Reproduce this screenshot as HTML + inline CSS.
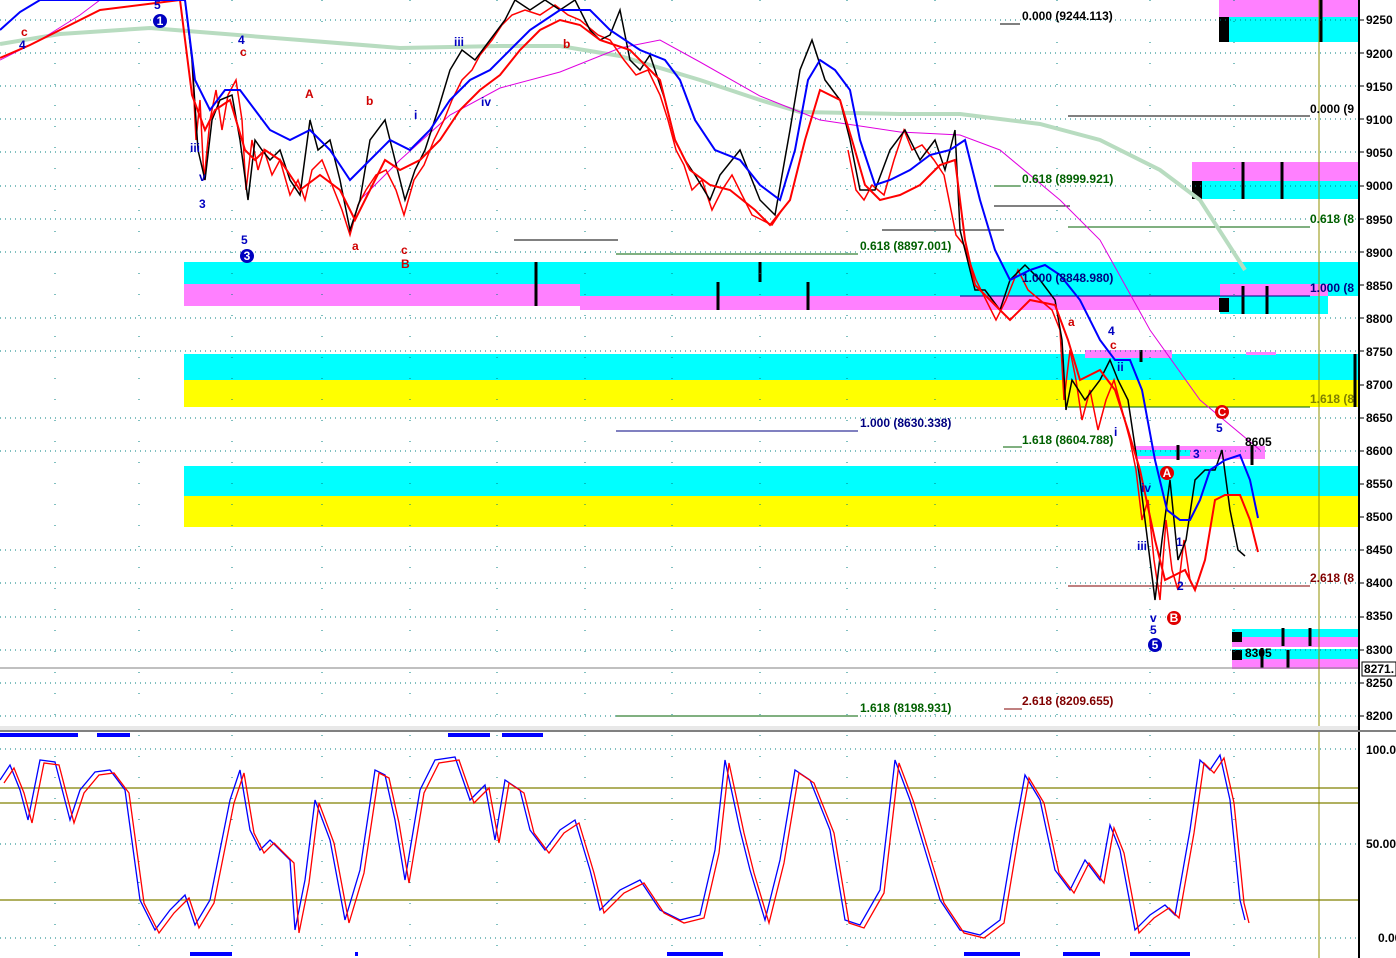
<!DOCTYPE html>
<html><head><meta charset="utf-8"><style>
html,body{margin:0;padding:0;background:#fff;overflow:hidden}
svg{display:block}
text{font-family:"Liberation Sans",Arial,sans-serif;font-weight:bold;font-size:12px}
</style></head><body>
<svg width="1396" height="958" viewBox="0 0 1396 958" xmlns="http://www.w3.org/2000/svg">
<rect width="1396" height="958" fill="#fff"/>
<rect x="184" y="262" width="396" height="22" fill="#00ffff"/>
<rect x="184" y="284" width="396" height="22" fill="#ff80ff"/>
<rect x="580" y="262" width="778" height="34" fill="#00ffff"/>
<rect x="580" y="296" width="640" height="14" fill="#ff80ff"/>
<rect x="1220" y="284" width="108" height="30" fill="#ff80ff"/>
<rect x="1220" y="296" width="108" height="18" fill="#00ffff"/>
<rect x="184" y="354" width="1174" height="26" fill="#00ffff"/>
<rect x="184" y="380" width="1174" height="27" fill="#ffff00"/>
<rect x="184" y="466" width="1174" height="30" fill="#00ffff"/>
<rect x="184" y="496" width="1174" height="31" fill="#ffff00"/>
<rect x="1085" y="350" width="87" height="8" fill="#ff80ff"/>
<rect x="1135" y="446" width="130" height="13" fill="#ff80ff"/>
<rect x="1135" y="450" width="55" height="6" fill="#00ffff"/>
<rect x="1219" y="0" width="139" height="17" fill="#ff80ff"/>
<rect x="1219" y="17" width="139" height="25" fill="#00ffff"/>
<rect x="1219" y="17" width="10" height="25" fill="#000"/>
<rect x="1192" y="162" width="166" height="19" fill="#ff80ff"/>
<rect x="1192" y="181" width="166" height="18" fill="#00ffff"/>
<rect x="1192" y="181" width="10" height="18" fill="#000"/>
<rect x="1232" y="629" width="126" height="8" fill="#00ffff"/>
<rect x="1232" y="637" width="126" height="10" fill="#ff80ff"/>
<rect x="1232" y="649" width="126" height="10" fill="#00ffff"/>
<rect x="1232" y="659" width="126" height="10" fill="#ff80ff"/>
<rect x="1232" y="632" width="10" height="10" fill="#000"/>
<rect x="1232" y="650" width="10" height="10" fill="#000"/>
<rect x="1246" y="352" width="30" height="3" fill="#ff80ff"/>
<g stroke="#000" stroke-width="3">
<line x1="536" y1="262" x2="536" y2="306"/><line x1="718" y1="282" x2="718" y2="310"/><line x1="760" y1="262" x2="760" y2="282"/><line x1="808" y1="282" x2="808" y2="310"/>
<line x1="1321" y1="0" x2="1321" y2="42"/><line x1="1243" y1="162" x2="1243" y2="199"/><line x1="1282" y1="162" x2="1282" y2="199"/>
<line x1="1243" y1="286" x2="1243" y2="314"/><line x1="1267" y1="286" x2="1267" y2="314"/><line x1="1355" y1="354" x2="1355" y2="407"/>
<line x1="1141" y1="350" x2="1141" y2="362"/><line x1="1178" y1="445" x2="1178" y2="460"/><line x1="1252" y1="445" x2="1252" y2="465"/>
<line x1="1283" y1="628" x2="1283" y2="646"/><line x1="1310" y1="628" x2="1310" y2="646"/><line x1="1262" y1="648" x2="1262" y2="668"/><line x1="1288" y1="650" x2="1288" y2="668"/>
</g>
<rect x="1219" y="298" width="10" height="14" fill="#000"/>
<g stroke="#008080" stroke-dasharray="1,4" stroke-width="1">
<line x1="0" y1="20" x2="1358" y2="20"/><line x1="0" y1="53" x2="1358" y2="53"/><line x1="0" y1="86" x2="1358" y2="86"/><line x1="0" y1="119" x2="1358" y2="119"/><line x1="0" y1="152" x2="1358" y2="152"/><line x1="0" y1="186" x2="1358" y2="186"/><line x1="0" y1="219" x2="1358" y2="219"/><line x1="0" y1="252" x2="1358" y2="252"/><line x1="0" y1="318" x2="1358" y2="318"/><line x1="0" y1="351" x2="1358" y2="351"/><line x1="0" y1="418" x2="1358" y2="418"/><line x1="0" y1="451" x2="1358" y2="451"/><line x1="0" y1="550" x2="1358" y2="550"/><line x1="0" y1="583" x2="1358" y2="583"/><line x1="0" y1="617" x2="1358" y2="617"/><line x1="0" y1="650" x2="1358" y2="650"/><line x1="0" y1="683" x2="1358" y2="683"/><line x1="0" y1="716" x2="1358" y2="716"/>
<line x1="0" y1="749" x2="1358" y2="749"/><line x1="0" y1="844" x2="1358" y2="844"/><line x1="0" y1="938" x2="1358" y2="938"/>
</g>
<g stroke="#008080" stroke-dasharray="1,20" stroke-width="1">
<line x1="55" y1="0" x2="55" y2="958"/><line x1="139" y1="0" x2="139" y2="958"/><line x1="232" y1="0" x2="232" y2="958"/><line x1="322" y1="0" x2="322" y2="958"/><line x1="410" y1="0" x2="410" y2="958"/><line x1="497" y1="0" x2="497" y2="958"/><line x1="585" y1="0" x2="585" y2="958"/><line x1="672" y1="0" x2="672" y2="958"/><line x1="760" y1="0" x2="760" y2="958"/><line x1="847" y1="0" x2="847" y2="958"/><line x1="935" y1="0" x2="935" y2="958"/><line x1="1057" y1="0" x2="1057" y2="958"/><line x1="1150" y1="0" x2="1150" y2="958"/><line x1="1234" y1="0" x2="1234" y2="958"/>
</g>
<g stroke-width="1">
<line x1="1000" y1="24" x2="1020" y2="24" stroke="#000"/>
<line x1="1068" y1="116" x2="1310" y2="116" stroke="#000"/>
<line x1="994" y1="186" x2="1020" y2="186" stroke="#006000"/>
<line x1="994" y1="206" x2="1070" y2="206" stroke="#000"/>
<line x1="1068" y1="227" x2="1310" y2="227" stroke="#006000"/>
<line x1="514" y1="240" x2="618" y2="240" stroke="#000"/>
<line x1="616" y1="254" x2="858" y2="254" stroke="#006000"/>
<line x1="882" y1="230" x2="1004" y2="230" stroke="#000"/>
<line x1="960" y1="296" x2="1310" y2="296" stroke="#000080"/>
<line x1="616" y1="431" x2="858" y2="431" stroke="#000080"/>
<line x1="1068" y1="407" x2="1310" y2="407" stroke="#006000"/>
<line x1="1003" y1="447" x2="1022" y2="447" stroke="#006000"/>
<line x1="1068" y1="586" x2="1310" y2="586" stroke="#800000"/>
<line x1="616" y1="716" x2="858" y2="716" stroke="#006000"/>
<line x1="1004" y1="709" x2="1022" y2="709" stroke="#800000"/>
<line x1="0" y1="668" x2="1358" y2="668" stroke="#808080"/>
<line x1="1319" y1="0" x2="1319" y2="958" stroke="#909000"/>
</g>
<polyline fill="none" stroke="#b8dcc0" stroke-width="4" points="0,44 60,34 150,28 200,32 300,40 400,48 500,46 560,46 620,56 700,80 760,100 800,112 900,114 960,114 1040,124 1100,140 1160,170 1200,200 1245,270"/>
<polyline fill="none" stroke="#e000e0" stroke-width="1" points="0,60 40,40 80,15 100,0"/>
<polyline fill="none" stroke="#e000e0" stroke-width="1" points="360,200 400,160 450,115 500,88 560,72 620,48 660,40 700,62 760,96 820,120 900,132 960,135 1000,150 1060,200 1100,240 1150,330 1200,400 1260,450"/>
<!-- red candle clutter -->
<polyline fill="none" stroke="#ff0000" stroke-width="1.5" points="192,60 196,140 200,100 204,180 210,120 216,90 222,130 228,95 236,80 242,120 246,190 252,140 258,170 264,150 272,175 280,160 290,195 298,180 305,200 312,170 322,160 332,185 342,210 350,235 358,205 366,190 376,175 386,170 396,190 404,215 414,180 424,165 434,140 444,120 452,100 462,80 472,70 480,55 492,40 502,25 512,15 525,10 540,15 555,5 568,15 580,20 598,35 610,40 624,60 636,75 648,70 660,95 668,120 676,150 684,165 692,190 702,180 712,210 722,190 732,175 742,195 752,215 762,220 772,225 782,210"/>
<polyline fill="none" stroke="#ff0000" stroke-width="1.5" points="848,150 856,190 864,200 872,185 884,195 894,160 904,130 912,150 922,145 934,160 944,175 956,235 964,245 976,280 986,300 996,320 1006,300 1018,270 1028,290 1040,300 1052,310 1060,330 1064,400 1070,350 1076,380 1082,420 1090,390 1098,430 1106,400 1114,380 1122,410 1130,440 1136,470 1142,520 1148,500 1154,560 1160,600 1166,520 1172,570 1178,590 1184,540 1190,580"/>
<polyline fill="none" stroke="#000" stroke-width="1.5" points="185,0 192,60 198,150 205,180 212,120 220,100 232,95 240,140 248,200 255,140 262,150 270,160 280,150 290,180 300,195 310,120 318,150 330,140 340,180 350,230 360,200 370,140 385,120 395,160 405,200 415,170 425,150 438,110 450,70 462,50 475,60 490,40 505,20 515,0 530,10 545,0 560,10 575,0 590,30 600,40 610,35 620,10 630,60 640,70 650,55 665,100 675,140 685,160 695,175 710,200 720,175 740,150 760,200 775,215 790,130 800,70 812,40 825,80 840,100 850,140 860,190 875,190 890,150 905,130 920,160 935,140 945,170 955,130 960,230 975,290 985,290 1000,310 1010,280 1025,265 1040,280 1055,300 1062,340 1066,410 1072,380 1085,400 1100,380 1110,360 1118,380 1128,400 1140,480 1150,560 1155,600 1162,540 1170,480 1178,560 1186,540 1195,480 1205,470 1215,470 1222,450 1230,510 1238,550 1245,556"/>
<polyline fill="none" stroke="#ff0000" stroke-width="2" points="0,58 30,45 60,30 100,10 180,0 192,95 205,130 215,110 230,100 245,150 255,160 265,150 280,160 300,190 320,175 340,190 355,220 370,190 385,160 400,170 420,160 440,140 460,110 480,90 500,75 520,50 540,30 560,20 580,25 600,40 630,50 660,80 675,140 690,170 710,185 730,190 755,210 770,225 790,200 805,140 820,90 840,100 852,140 865,185 880,200 900,195 920,185 940,165 955,160 965,240 975,285 990,300 1010,320 1030,300 1055,305 1068,340 1080,380 1100,370 1115,390 1128,430 1140,470 1155,540 1165,580 1175,575 1185,570 1195,590 1205,560 1215,500 1225,495 1240,495 1250,520 1258,552"/>
<polyline fill="none" stroke="#0000ff" stroke-width="2" points="0,30 20,12 40,0 185,0 195,80 210,110 225,90 240,90 255,110 270,130 290,140 310,130 330,150 350,180 370,160 390,140 410,150 430,130 450,100 470,80 490,70 510,50 530,30 560,10 590,10 610,30 640,50 665,60 680,80 695,120 715,150 740,160 760,185 780,200 795,150 808,80 820,60 835,70 850,90 860,140 875,185 890,180 910,170 930,155 950,150 965,140 980,200 995,250 1010,280 1030,270 1045,265 1060,275 1080,300 1100,340 1115,360 1130,360 1142,390 1155,460 1167,510 1180,520 1190,520 1200,500 1210,470 1225,460 1240,455 1250,480 1258,518"/>
<g font-size="12">
<text x="1022" y="20" fill="#000">0.000 (9244.113)</text>
<text x="1310" y="113" fill="#000">0.000 (9</text>
<text x="1022" y="183" fill="#006000">0.618 (8999.921)</text>
<text x="1310" y="223" fill="#006000">0.618 (8</text>
<text x="860" y="250" fill="#006000">0.618 (8897.001)</text>
<text x="1022" y="282" fill="#000080">1.000 (8848.980)</text>
<text x="1310" y="292" fill="#000080">1.000 (8</text>
<text x="1310" y="403" fill="#808000">1.618 (8</text>
<text x="860" y="427" fill="#000080">1.000 (8630.338)</text>
<text x="1022" y="444" fill="#006000">1.618 (8604.788)</text>
<text x="1310" y="582" fill="#800000">2.618 (8</text>
<text x="860" y="712" fill="#006000">1.618 (8198.931)</text>
<text x="1022" y="705" fill="#800000">2.618 (8209.655)</text>
<text x="1245" y="446" fill="#000">8605</text>
<text x="1245" y="657" fill="#000">8305</text>
</g>
<g font-size="12">
<text x="154" y="9" fill="#0000c0">5</text><text x="238" y="44" fill="#0000c0">4</text><text x="240" y="56" fill="#d00000">c</text>
<text x="199" y="181" fill="#0000c0">v</text><text x="199" y="208" fill="#0000c0">3</text><text x="190" y="152" fill="#0000c0">iii</text>
<text x="241" y="244" fill="#0000c0">5</text><text x="305" y="98" fill="#d00000">A</text><text x="366" y="105" fill="#d00000">b</text>
<text x="352" y="250" fill="#d00000">a</text><text x="401" y="254" fill="#d00000">c</text><text x="401" y="268" fill="#d00000">B</text>
<text x="454" y="46" fill="#0000c0">iii</text><text x="481" y="106" fill="#0000c0">iv</text><text x="414" y="119" fill="#0000c0">i</text>
<text x="563" y="48" fill="#d00000">b</text><text x="21" y="36" fill="#d00000">c</text><text x="19" y="49" fill="#0000c0">4</text>
<text x="1108" y="335" fill="#0000c0">4</text><text x="1110" y="349" fill="#d00000">c</text><text x="1068" y="326" fill="#d00000">a</text>
<text x="1117" y="371" fill="#0000c0">ii</text><text x="1114" y="436" fill="#0000c0">i</text>
<text x="1141" y="492" fill="#0000c0">iv</text><text x="1137" y="550" fill="#0000c0">iii</text>
<text x="1176" y="546" fill="#0000c0">1</text><text x="1193" y="458" fill="#0000c0">3</text><text x="1216" y="432" fill="#0000c0">5</text>
<text x="1150" y="622" fill="#0000c0">v</text><text x="1150" y="634" fill="#0000c0">5</text><text x="1177" y="590" fill="#0000c0">2</text>
</g>
<g font-size="11" text-anchor="middle">
<circle cx="160" cy="21" r="7" fill="#0000c0"/><text x="160" y="25" fill="#fff">1</text>
<circle cx="247" cy="256" r="7" fill="#0000c0"/><text x="247" y="260" fill="#fff">3</text>
<circle cx="1155" cy="645" r="7" fill="#0000c0"/><text x="1155" y="649" fill="#fff">5</text>
<circle cx="1167" cy="473" r="7" fill="#e00000"/><text x="1167" y="477" fill="#fff">A</text>
<circle cx="1174" cy="618" r="7" fill="#e00000"/><text x="1174" y="622" fill="#fff">B</text>
<circle cx="1222" cy="412" r="7" fill="#e00000"/><text x="1222" y="416" fill="#fff">C</text>
</g>
<rect x="1358" y="0" width="38" height="958" fill="#fff"/>
<line x1="1359" y1="0" x2="1359" y2="958" stroke="#000" stroke-width="2"/>
<g font-size="13" fill="#000">
<text x="1366" y="24">9250</text><text x="1366" y="58">9200</text><text x="1366" y="91">9150</text><text x="1366" y="124">9100</text><text x="1366" y="157">9050</text><text x="1366" y="190">9000</text><text x="1366" y="224">8950</text><text x="1366" y="257">8900</text><text x="1366" y="290">8850</text><text x="1366" y="323">8800</text><text x="1366" y="356">8750</text><text x="1366" y="389">8700</text><text x="1366" y="422">8650</text><text x="1366" y="455">8600</text><text x="1366" y="488">8550</text><text x="1366" y="521">8500</text><text x="1366" y="554">8450</text><text x="1366" y="587">8400</text><text x="1366" y="620">8350</text><text x="1366" y="654">8300</text><text x="1366" y="687">8250</text><text x="1366" y="720">8200</text>
<text x="1366" y="754">100.0</text><text x="1366" y="848">50.00</text><text x="1378" y="942">0.00</text>
</g>
<g stroke="#000"><line x1="1359" y1="20" x2="1364" y2="20"/><line x1="1359" y1="53" x2="1364" y2="53"/><line x1="1359" y1="86" x2="1364" y2="86"/><line x1="1359" y1="119" x2="1364" y2="119"/><line x1="1359" y1="152" x2="1364" y2="152"/><line x1="1359" y1="186" x2="1364" y2="186"/><line x1="1359" y1="219" x2="1364" y2="219"/><line x1="1359" y1="252" x2="1364" y2="252"/><line x1="1359" y1="285" x2="1364" y2="285"/><line x1="1359" y1="318" x2="1364" y2="318"/><line x1="1359" y1="351" x2="1364" y2="351"/><line x1="1359" y1="385" x2="1364" y2="385"/><line x1="1359" y1="418" x2="1364" y2="418"/><line x1="1359" y1="451" x2="1364" y2="451"/><line x1="1359" y1="484" x2="1364" y2="484"/><line x1="1359" y1="517" x2="1364" y2="517"/><line x1="1359" y1="550" x2="1364" y2="550"/><line x1="1359" y1="583" x2="1364" y2="583"/><line x1="1359" y1="617" x2="1364" y2="617"/><line x1="1359" y1="650" x2="1364" y2="650"/><line x1="1359" y1="683" x2="1364" y2="683"/><line x1="1359" y1="716" x2="1364" y2="716"/></g>
<rect x="1362" y="662" width="34" height="14" fill="#fff" stroke="#000"/>
<text x="1364" y="673" font-size="12" fill="#000">8271.</text>
<rect x="0" y="726" width="1358" height="6" fill="#e8e8e8"/>
<line x1="0" y1="731" x2="1396" y2="731" stroke="#808080" stroke-width="2"/>
<g stroke="#808000" stroke-width="1.2">
<line x1="0" y1="788" x2="1358" y2="788"/><line x1="0" y1="803" x2="1358" y2="803"/><line x1="0" y1="900" x2="1358" y2="900"/>
</g>
<g fill="#0000ff">
<rect x="0" y="733" width="78" height="4"/><rect x="97" y="733" width="33" height="4"/><rect x="448" y="733" width="42" height="4"/><rect x="502" y="733" width="41" height="4"/>
<rect x="190" y="952" width="42" height="4"/><rect x="667" y="952" width="56" height="4"/><rect x="964" y="952" width="56" height="4"/><rect x="1063" y="952" width="37" height="4"/><rect x="1130" y="952" width="60" height="4"/><rect x="355" y="952" width="3" height="4"/>
</g>
<polyline fill="none" stroke="#0000ff" stroke-width="1.3" points="0,780 10,765 20,790 28,820 40,760 55,762 70,820 80,790 95,772 110,770 125,790 140,900 155,930 170,910 185,895 195,925 210,900 230,800 240,770 250,830 260,850 270,840 290,860 295,930 305,880 315,800 330,840 345,920 360,870 375,770 385,775 395,820 405,880 420,790 435,760 455,757 470,800 485,785 495,840 505,780 520,790 530,830 545,850 560,830 575,820 590,870 600,910 620,890 640,880 660,910 680,920 700,915 715,850 725,760 740,830 750,870 765,920 780,860 795,770 810,780 830,830 845,920 860,925 880,890 895,760 910,800 925,850 940,900 960,930 980,935 1000,920 1015,830 1025,775 1040,800 1055,870 1070,890 1085,860 1100,880 1110,825 1120,850 1135,930 1150,915 1165,905 1175,915 1190,830 1200,760 1210,770 1220,755 1230,800 1240,900 1245,920"/>
<polyline fill="none" stroke="#ff0000" stroke-width="1.3" transform="translate(4,3)" points="0,780 10,765 20,790 28,820 40,760 55,762 70,820 80,790 95,772 110,770 125,790 140,900 155,930 170,910 185,895 195,925 210,900 230,800 240,770 250,830 260,850 270,840 290,860 295,930 305,880 315,800 330,840 345,920 360,870 375,770 385,775 395,820 405,880 420,790 435,760 455,757 470,800 485,785 495,840 505,780 520,790 530,830 545,850 560,830 575,820 590,870 600,910 620,890 640,880 660,910 680,920 700,915 715,850 725,760 740,830 750,870 765,920 780,860 795,770 810,780 830,830 845,920 860,925 880,890 895,760 910,800 925,850 940,900 960,930 980,935 1000,920 1015,830 1025,775 1040,800 1055,870 1070,890 1085,860 1100,880 1110,825 1120,850 1135,930 1150,915 1165,905 1175,915 1190,830 1200,760 1210,770 1220,755 1230,800 1240,900 1245,920"/>
</svg>
</body></html>
